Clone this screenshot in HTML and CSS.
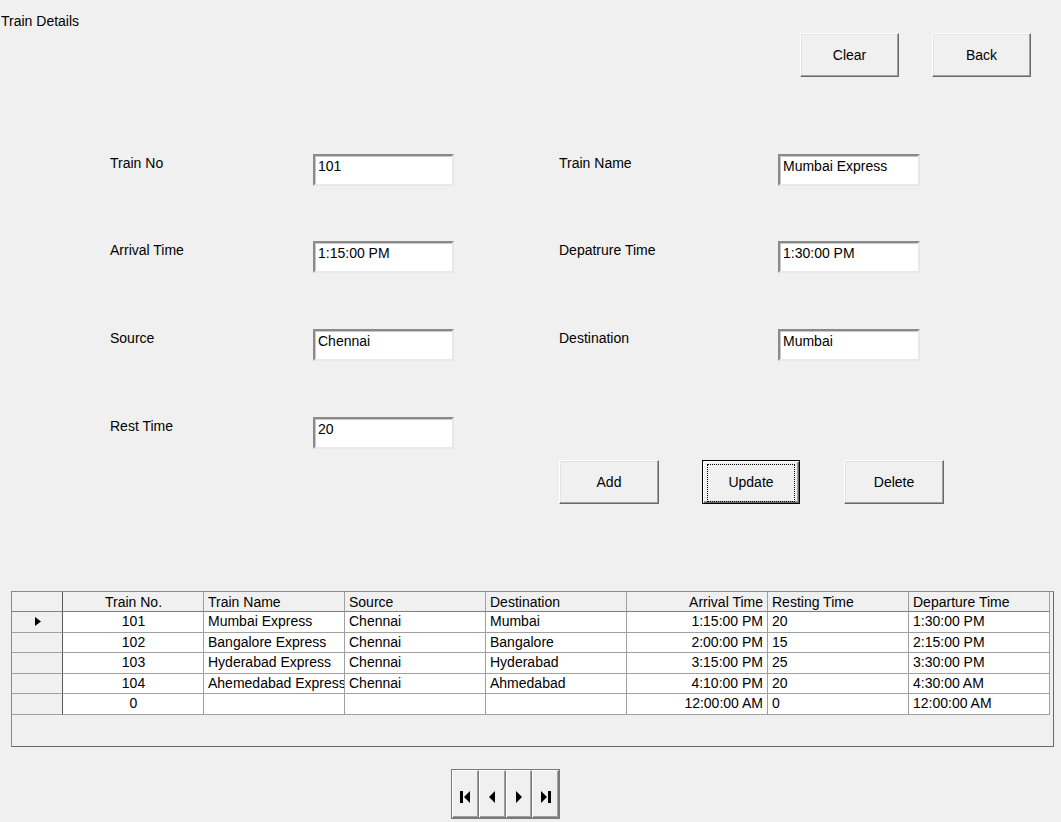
FILE: index.html
```html
<!DOCTYPE html>
<html lang="en">
<head>
  <meta charset="UTF-8" />
  <title>Train Details</title>
  <link rel="stylesheet" href="styles.css">
</head>
<body>
  <div class="top-bar">
    <div class="form-title">Train Details</div>
    <div class="top-buttons">
      <button class="win-button">Clear</button>
      <button class="win-button">Back</button>
    </div>
  </div>

  <div class="fields">
    <div class="field-label">Train No</div>
    <input class="text-box" value="101">
    <div class="field-label right-col">Train Name</div>
    <input class="text-box" value="Mumbai Express">

    <div class="field-label">Arrival Time</div>
    <input class="text-box" value="1:15:00 PM">
    <div class="field-label right-col">Depatrure Time</div>
    <input class="text-box" value="1:30:00 PM">

    <div class="field-label">Source</div>
    <input class="text-box" value="Chennai">
    <div class="field-label right-col">Destination</div>
    <input class="text-box" value="Mumbai">

    <div class="field-label">Rest Time</div>
    <input class="text-box" value="20">
  </div>

  <div class="actions">
    <button class="win-button action">Add</button>
    <button class="win-button action default"><span class="focus-rect">Update</span></button>
    <button class="win-button action">Delete</button>
  </div>

  <div class="data-grid">
    <div class="grid-table">
      <div class="cell row-head head"></div>
      <div class="cell head center">Train No.</div>
      <div class="cell head">Train Name</div>
      <div class="cell head">Source</div>
      <div class="cell head">Destination</div>
      <div class="cell head right">Arrival Time</div>
      <div class="cell head">Resting Time</div>
      <div class="cell head">Departure Time</div>

      <div class="cell row-head"><svg class="current" width="6" height="9" viewBox="0 0 6 9"><path d="M0 0L6 4.5L0 9Z"/></svg></div>
      <div class="cell center">101</div>
      <div class="cell">Mumbai Express</div>
      <div class="cell">Chennai</div>
      <div class="cell">Mumbai</div>
      <div class="cell right">1:15:00 PM</div>
      <div class="cell">20</div>
      <div class="cell">1:30:00 PM</div>

      <div class="cell row-head"></div>
      <div class="cell center">102</div>
      <div class="cell">Bangalore Express</div>
      <div class="cell">Chennai</div>
      <div class="cell">Bangalore</div>
      <div class="cell right">2:00:00 PM</div>
      <div class="cell">15</div>
      <div class="cell">2:15:00 PM</div>

      <div class="cell row-head"></div>
      <div class="cell center">103</div>
      <div class="cell">Hyderabad Express</div>
      <div class="cell">Chennai</div>
      <div class="cell">Hyderabad</div>
      <div class="cell right">3:15:00 PM</div>
      <div class="cell">25</div>
      <div class="cell">3:30:00 PM</div>

      <div class="cell row-head"></div>
      <div class="cell center">104</div>
      <div class="cell clip">Ahemedabad Express</div>
      <div class="cell">Chennai</div>
      <div class="cell">Ahmedabad</div>
      <div class="cell right">4:10:00 PM</div>
      <div class="cell">20</div>
      <div class="cell">4:30:00 AM</div>

      <div class="cell row-head"></div>
      <div class="cell center">0</div>
      <div class="cell"></div>
      <div class="cell"></div>
      <div class="cell"></div>
      <div class="cell right">12:00:00 AM</div>
      <div class="cell">0</div>
      <div class="cell">12:00:00 AM</div>
    </div>
  </div>

  <div class="nav">
    <button class="nav-button"><svg width="10" height="12" viewBox="0 0 10 12"><rect x="0" y="0" width="3" height="12"/><path d="M10 0V12L4 6Z"/></svg></button>
    <button class="nav-button"><svg width="6" height="12" viewBox="0 0 6 12"><path d="M6 0V12L0 6Z"/></svg></button>
    <button class="nav-button"><svg width="6" height="12" viewBox="0 0 6 12"><path d="M0 0V12L6 6Z"/></svg></button>
    <button class="nav-button"><svg width="10" height="12" viewBox="0 0 10 12"><path d="M0 0V12L6 6Z"/><rect x="7" y="0" width="3" height="12"/></svg></button>
  </div>
</body>
</html>
```

FILE: styles.css
```css
* {
  box-sizing: border-box;
}

body {
  margin: 0;
  width: 1061px;
  min-height: 822px;
  background: #f0f0f0;
  color: #000;
  font-family: 'Liberation Sans', Arial, sans-serif;
  font-size: 14px;
  line-height: 16px;
}

/* Title + Clear / Back */
.top-bar {
  display: flex;
  justify-content: space-between;
  align-items: flex-start;
  height: 77px;
  padding-right: 30px;
}

.form-title {
  margin: 13px 0 0 1px;
}

.top-buttons {
  display: flex;
  gap: 33px;
  margin-top: 33px;
}

.win-button {
  width: 99px;
  height: 44px;
  padding: 0;
  background: #f0f0f0;
  font-family: inherit;
  font-size: 14px;
  color: #000;
  border: 1px solid;
  border-color: #ffffff #696969 #696969 #ffffff;
  box-shadow: inset -1px -1px 0 #a0a0a0, inset 1px 1px 0 #e3e3e3;
}

/* Input form */
.fields {
  display: grid;
  grid-template-columns: 203px 141px 105px 219px 142px;
  grid-template-rows: 87px 88px 88px 32px;
  margin-top: 77px;
  padding-left: 110px;
}

.field-label {
  grid-column-start: 1;
  padding-top: 1px;
}

.field-label.right-col {
  grid-column-start: 4;
}

.text-box {
  width: 100%;
  height: 32px;
  margin: 0;
  padding: 3px 3px 11px;
  background: #fff;
  font-family: inherit;
  font-size: 14px;
  line-height: 16px;
  color: #000;
  border: 2px solid;
  border-color: #8a8a8a #e8e8e8 #e8e8e8 #8a8a8a;
  box-shadow: inset 1px 1px 0 #c8c8c8;
  outline: none;
}

.actions {
  display: flex;
  margin: 11px 0 0 559px;
}

.action {
  width: 100px;
}

.action.default {
  width: 98px;
  margin: 0 44px 0 43px;
  padding: 2px;
  border: 1px solid #000;
  box-shadow: inset 1px 1px 0 #fff, inset -1px -1px 0 #696969, inset -2px -2px 0 #a0a0a0;
}

.focus-rect {
  display: flex;
  align-items: center;
  justify-content: center;
  height: 100%;
  margin: 1px 2px;
  padding-bottom: 2px;
  border: 1px dotted #000;
}

/* Data grid */
.data-grid {
  width: 1043px;
  height: 156px;
  margin: 87px 0 0 11px;
  border: 1px solid;
  border-color: #8a8a8a #696969 #696969 #8a8a8a;
}

.grid-table {
  display: grid;
  grid-template-columns: 51px repeat(7, 141px);
  grid-template-rows: 20px 21px 20px 21px 20px 21px;
}

.cell {
  padding: 0 3px 0 4px;
  line-height: 19px;
  white-space: nowrap;
  overflow: hidden;
  background: #fff;
  border-right: 1px solid #a0a0a0;
  border-bottom: 1px solid #a0a0a0;
}

.cell.clip {
  padding-right: 0;
  text-overflow: clip;
  max-width: 141px;
}

.cell.head {
  padding-top: 2px;
  background: #f0f0f0;
  border-bottom-color: #808080;
  line-height: 17px;
}

.cell.row-head {
  background: #f0f0f0;
  border-right-color: #5a5a5a;
}

.cell.center {
  text-align: center;
}

.cell.right {
  text-align: right;
  padding-right: 4px;
}

.current {
  display: block;
  margin: 5px 0 0 19px;
}

/* Record navigator */
.nav {
  display: flex;
  width: 109px;
  height: 50px;
  margin: 22px 0 0 451px;
  border: 1px solid #7a7a7a;
}

.nav-button {
  flex: 1;
  display: flex;
  align-items: center;
  justify-content: center;
  padding: 6px 0 0;
  background: #f0f0f0;
  border: 1px solid;
  border-color: #ffffff #7a7a7a #7a7a7a #ffffff;
  box-shadow: inset -1px -1px 0 #a0a0a0;
}
```
